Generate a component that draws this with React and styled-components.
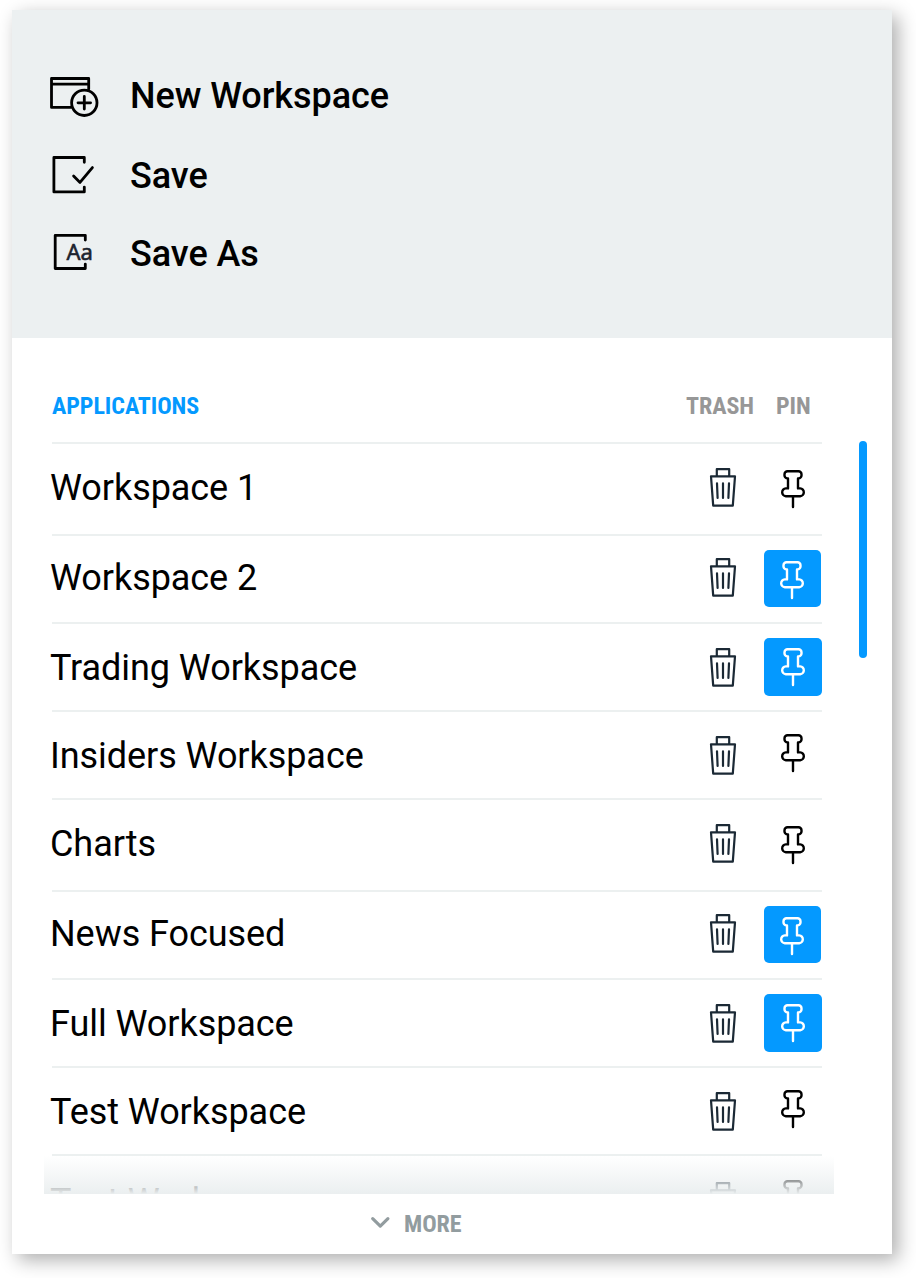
import React from "react";
import styled, { createGlobalStyle } from "styled-components";

const GlobalStyle = createGlobalStyle`
  *, *::before, *::after { box-sizing: border-box; }
  body {
    margin: 0;
    background: #fff;
    color: #000;
    font-family: Roboto, "Liberation Sans", sans-serif;
  }
`;

const Page = styled.div`
  height: 1278px;
  padding: 10px 24px 24px 12px;
  overflow: hidden;
`;

const Panel = styled.main`
  display: flex;
  flex-direction: column;
  height: 1244px;
  background: #fff;
  box-shadow: 6px 6px 18px rgba(0, 0, 0, 0.32);
`;

const Actions = styled.nav`
  height: 328px;
  padding: 65px 38px 0;
  background: #ecf0f1;
`;

const Action = styled.button`
  display: grid;
  grid-template-columns: 80px 1fr;
  align-items: start;
  width: 100%;
  height: ${(p) => p.$height}px;
  padding: 0;
  border: 0;
  background: none;
  color: inherit;
  text-align: left;
  font: 500 36px/42px Roboto, "Liberation Sans", sans-serif;
  letter-spacing: -0.06px;
`;

const Icon = styled.svg`
  display: block;
  overflow: visible;
  fill: none;
  stroke: currentColor;
  stroke-width: ${(p) => p.$weight || 2.2}px;
  stroke-linejoin: round;
  stroke-linecap: round;
`;

const IconText = styled.text`
  font: 400 22px "Noto Sans", "Open Sans", sans-serif;
  fill: #1c232e;
  stroke: #1c232e;
  stroke-width: 0.6px;
`;

const Body = styled.section`
  display: grid;
  grid-template-columns: 790px 8px;
  column-gap: 25px;
  height: 856px;
  padding: 0 25px 0 32px;
`;

const Listing = styled.div`
  position: relative;
  height: 856px;
  overflow: hidden;
`;

const Header = styled.header`
  display: grid;
  grid-template-columns: 634px 90px 1fr;
  height: 104px;
  padding: 54px 12px 0 8px;
`;

const Label = styled.span`
  font: 700 24px/28px "Roboto Condensed", Roboto, sans-serif;
  font-stretch: 75%;
  letter-spacing: -0.06px;
  color: ${(p) => p.$color};
`;

const Row = styled.div`
  display: grid;
  grid-template-columns: 658px 54px 58px;
  align-items: start;
  height: ${(p) => p.$height}px;
  margin: 0 12px 0 8px;
  border-top: 2px solid #ecf0f0;
`;

const Name = styled.span`
  margin: ${(p) => p.$top}px 0 0 -2px;
  font-size: 36px;
  line-height: 42px;
  letter-spacing: -0.06px;
  white-space: nowrap;
`;

const TrashButton = styled.button`
  padding: 0;
  border: 0;
  background: none;
  color: #1b2935;
  margin-top: ${(p) => p.$top}px;
`;

const PinButton = styled.button`
  display: flex;
  align-items: flex-start;
  width: ${(p) => p.$size}px;
  height: ${(p) => p.$size}px;
  margin-top: 14px;
  padding: ${(p) => p.$inset}px 0 0 ${(p) => (p.$size === 57 ? 16.2 : 16.6)}px;
  border: 0;
  border-radius: 5px;
  background: ${(p) => (p.$pinned ? "#0499ff" : "transparent")};
  color: ${(p) => (p.$pinned ? "#fff" : "#000")};
`;

const Fade = styled.div`
  position: absolute;
  left: 0;
  right: 0;
  bottom: 0;
  height: 38px;
  background: linear-gradient(rgba(255, 255, 255, 0), #ebeff0);
`;

const ScrollThumb = styled.div`
  height: 217px;
  margin-top: 103px;
  border-radius: 4px;
  background: #0499ff;
`;

const More = styled.button`
  display: flex;
  align-items: flex-start;
  gap: 14px;
  height: 60px;
  padding: 16px 0 0 359px;
  border: 0;
  background: none;
  color: #929c9f;
`;

const Chevron = styled(Icon)`
  margin-top: 7px;
`;

const NewIcon = () => (
  <Icon width="50" height="42" viewBox="50 75 50 42" $weight={2.8}>
    <path d="M88.7 89V78.5H51.5v28.9h19.4M51.5 84.2h37.2" />
    <circle cx="84.3" cy="102.8" r="12.7" />
    <path d="M78 102.8h12.6M84.3 96.5v12.6" />
  </Icon>
);

const SaveIcon = () => (
  <Icon width="50" height="42" viewBox="50 155 50 42" $weight={2.8}>
    <path d="M84.3 162.3v-4.8H53.9v34.4h30.4v-4.8" />
    <path d="M73.6 176l6.4 6.4 12.4-14.8" />
  </Icon>
);

const SaveAsIcon = () => (
  <Icon width="50" height="42" viewBox="50 233 50 42" $weight={2.8}>
    <path d="M85.3 240v-4.7H55.2v33.2h30.1v-4.4" />
    <IconText x="66.5" y="259.8">Aa</IconText>
  </Icon>
);

const TrashIcon = () => (
  <Icon width="26" height="39" viewBox="0 0 26 39">
    <path d="M1 8.4h24l-2.2 29.2H3.2zM6.8 8.4V1.2h12.4v7.2M7 15.4l.6 14.6M13 15.4V30M19 15.4L18.4 30" />
  </Icon>
);

const PinIcon = () => (
  <Icon width="24" height="38" viewBox="0 0 24 38" $weight={2.4}>
    <path d="M6.5 1.2h11a3 3 0 0 1 3 3v1.2a3 3 0 0 1-3 3H17v10h2.2a3.8 3.8 0 0 1 3.6 4 3.8 3.8 0 0 1-3.6 3.8H4.8a3.8 3.8 0 0 1-3.6-3.8 3.8 3.8 0 0 1 3.6-4H7v-10h-.5a3 3 0 0 1-3-3V4.2a3 3 0 0 1 3-3zM12 26.2V37" />
  </Icon>
);

const actions = [
  { label: "New Workspace", icon: NewIcon, height: 80 },
  { label: "Save", icon: SaveIcon, height: 78 },
  { label: "Save As", icon: SaveAsIcon, height: 42 },
];

const workspaces = [
  { name: "Workspace 1", height: 92, top: 23, inset: 12 },
  { name: "Workspace 2", height: 88, top: 21, inset: 11, pinned: true, size: 57 },
  { name: "Trading Workspace", height: 88, top: 23, inset: 10, pinned: true },
  { name: "Insiders Workspace", height: 88, top: 23, inset: 8 },
  { name: "Charts", height: 92, top: 23, inset: 12 },
  { name: "News Focused", height: 88, top: 21, inset: 11, pinned: true, size: 57 },
  { name: "Full Workspace", height: 88, top: 23, inset: 10, pinned: true },
  { name: "Test Workspace", height: 88, top: 23, inset: 8 },
  { name: "Test Workspace", height: 88, top: 25, inset: 10 },
];

export default function App() {
  return (
    <Page>
      <GlobalStyle />
      <Panel>
        <Actions>
          {actions.map(({ label, icon: Glyph, height }) => (
            <Action key={label} $height={height}>
              <Glyph />
              {label}
            </Action>
          ))}
        </Actions>
        <Body>
          <Listing>
            <Header>
              <Label $color="#0499ff">APPLICATIONS</Label>
              <Label $color="#979797">TRASH</Label>
              <Label $color="#979797">PIN</Label>
            </Header>
            {workspaces.map(({ name, height, top, inset, pinned, size = 58 }, i) => (
              <Row key={i} $height={height}>
                <Name $top={top}>{name}</Name>
                <TrashButton $top={top + 1} aria-label="Trash">
                  <TrashIcon />
                </TrashButton>
                <PinButton $pinned={pinned} $size={size} $inset={inset} aria-label="Pin">
                  <PinIcon />
                </PinButton>
              </Row>
            ))}
            <Fade />
          </Listing>
          <ScrollThumb />
        </Body>
        <More>
          <Chevron width="19" height="11" viewBox="0 0 19 11" $weight={3.2}>
            <path d="M1.7 1.7l7.6 7.4 7.6-7.4" />
          </Chevron>
          <Label $color="#929c9f">MORE</Label>
        </More>
      </Panel>
    </Page>
  );
}
